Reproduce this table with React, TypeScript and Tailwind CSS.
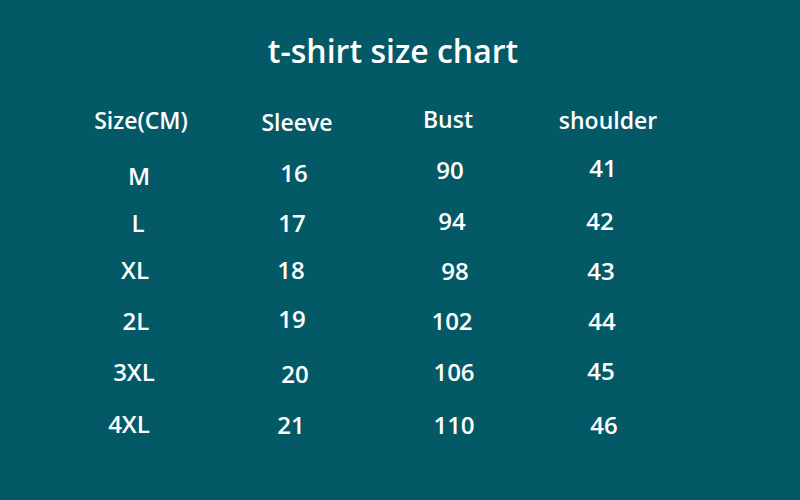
// t-shirt size chart
const headers = [
  { t: "Size(CM)", c: "mt-[1px]" },
  { t: "Sleeve", c: "mt-[3px]" },
  { t: "Bust", c: "mt-0" },
  { t: "shoulder", c: "mt-[1px]" },
];

// each cell keeps its own little nudge, like the hand-placed original
const rows = [
  [
    { t: "M", c: "ml-[-4px] mt-[8px]" },
    { t: "16", c: "ml-[-6px] mt-[5px]" },
    { t: "90", c: "ml-[4px] mt-[2px]" },
    { t: "41", c: "ml-[-10px] mt-0" },
  ],
  [
    { t: "L", c: "ml-[-6px] mt-[4px]" },
    { t: "17", c: "ml-[-10px] mt-[4px]" },
    { t: "94", c: "ml-[8px] mt-[2px]" },
    { t: "42", c: "ml-[-16px] mt-[2px]" },
  ],
  [
    { t: "XL", c: "ml-[-12px] mt-0" },
    { t: "18", c: "ml-[-12px] mt-0" },
    { t: "98", c: "ml-[14px] mt-[1px]" },
    { t: "43", c: "ml-[-14px] mt-[1px]" },
  ],
  [
    { t: "2L", c: "ml-[-10px] mt-0" },
    { t: "19", c: "ml-[-10px] mt-[-2px]" },
    { t: "102", c: "ml-[8px] mt-0" },
    { t: "44", c: "ml-[-12px] mt-0" },
  ],
  [
    { t: "3XL", c: "ml-[-14px] mt-0" },
    { t: "20", c: "ml-[-4px] mt-[2px]" },
    { t: "106", c: "ml-[12px] mt-0" },
    { t: "45", c: "ml-[-14px] mt-[-1px]" },
  ],
  [
    { t: "4XL", c: "ml-[-24px] mt-[1px]" },
    { t: "21", c: "ml-[-12px] mt-[2px]" },
    { t: "110", c: "ml-[12px] mt-[2px]" },
    { t: "46", c: "ml-[-8px] mt-[2px]" },
  ],
];

const colGap = ["ml-0", "ml-[36px]", "ml-[31px]", "ml-[40px]"];

export default function App() {
  return (
    <div className="w-[800px] h-[500px] bg-[#045966] text-white font-semibold overflow-hidden" style={{ fontFamily: '"Open Sans", "Noto Sans", sans-serif' }}>
      <div className="pt-[35px] flex justify-center">
        <h1 className="text-[32px] leading-none ml-[-14px]">t-shirt size chart</h1>
      </div>

      <div className="pl-[81px] mt-[41px] flex items-start h-[48px]">
        {headers.map((h, i) => (
          <div key={h.t} className={`w-[120px] flex justify-center ${colGap[i]}`}>
            <span className={`text-[23px] leading-none ${h.c}`}>{h.t}</span>
          </div>
        ))}
      </div>

      {rows.map((r, ri) => (
        <div key={ri} className="pl-[81px] flex items-start h-[51px]">
          {r.map((cell, i) => (
            <div key={i} className={`w-[120px] flex justify-center ${colGap[i]}`}>
              <span className={`text-[24px] leading-none ${cell.c}`}>{cell.t}</span>
            </div>
          ))}
        </div>
      ))}
    </div>
  );
}
